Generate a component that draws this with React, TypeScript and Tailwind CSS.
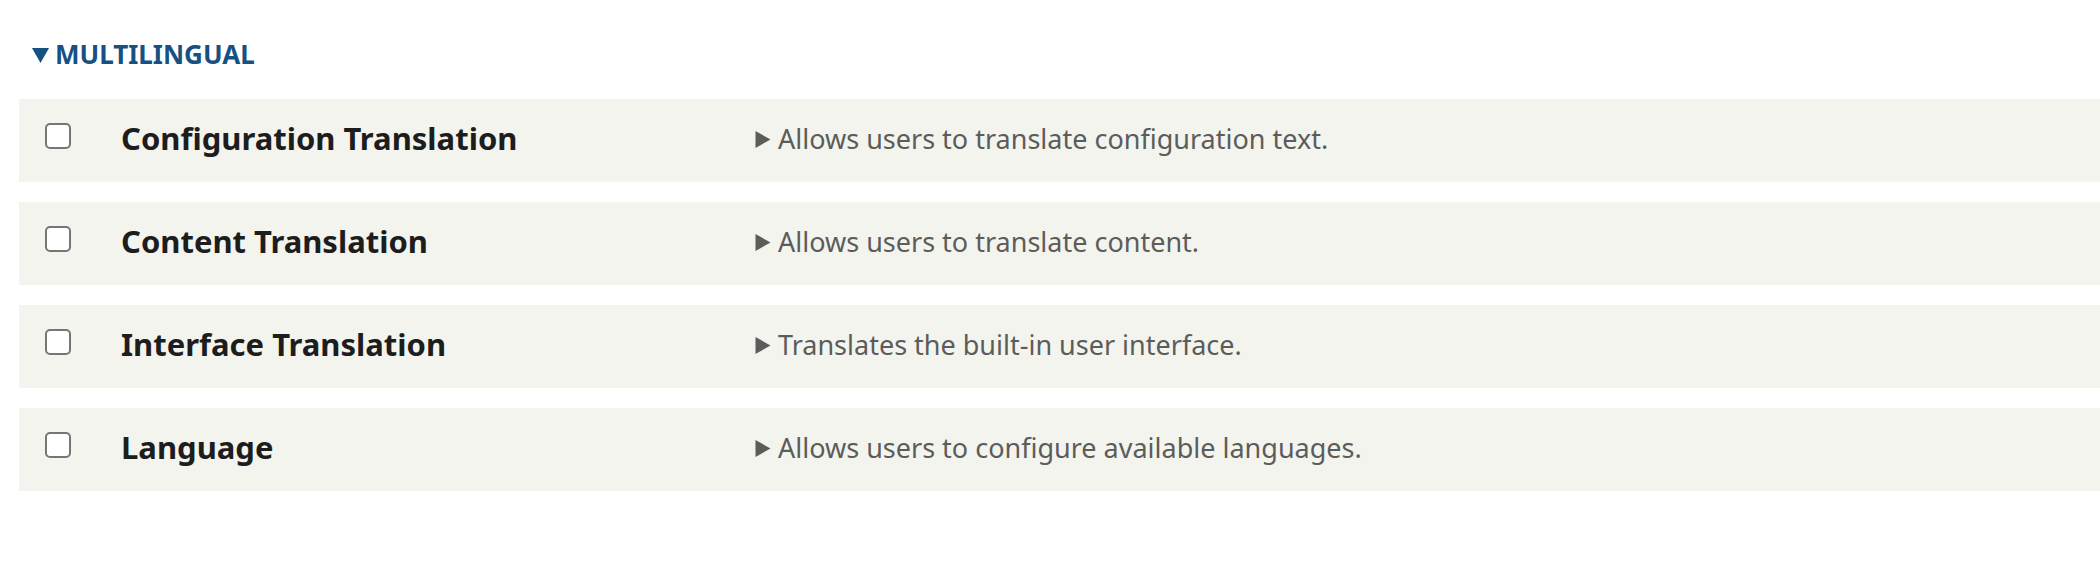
const modules = [
  { id: "config", name: "Configuration Translation", description: "Allows users to translate configuration text." },
  { id: "content", name: "Content Translation", description: "Allows users to translate content." },
  { id: "interface", name: "Interface Translation", description: "Translates the built-in user interface." },
  { id: "language", name: "Language", description: "Allows users to configure available languages." },
];

function ModuleRow({ id, name, description }: { id: string; name: string; description: string }) {
  return (
    <tr className="align-top">
      <td className="w-[100px] border-b-20 border-white bg-[#f3f4ee] pt-6 pl-[26px]">
        <input
          id={id}
          type="checkbox"
          className="block size-[26px] appearance-none rounded-[5px] border-2 border-[#767676] bg-white checked:bg-[#004f80]"
        />
      </td>
      <td className="w-[636px] border-b-20 border-white bg-[#f3f4ee] pt-5 pb-[23px] pl-[2px]">
        <label htmlFor={id} className="block text-[31px] leading-[38px] font-bold text-[#1d1d1d]">
          {name}
        </label>
      </td>
      <td className="border-b-20 border-white bg-[#f3f4ee] pt-5 pb-[23px]">
        <details className="group">
          <summary className="flex list-none items-center gap-[7px] text-[27px] leading-10 text-[#5c5c5b]">
            <svg viewBox="0 0 16 18" className="h-[18px] w-4 group-open:rotate-90" fill="currentColor" aria-hidden="true">
              <path d="M0.5 1 15.5 9.5 0.5 18Z" />
            </svg>
            {description}
          </summary>
        </details>
      </td>
    </tr>
  );
}

export default function App() {
  return (
    <main className="bg-white pt-[34px] pb-[54px] pl-[19px] font-['Noto_Sans','Open_Sans',sans-serif]">
      <details open className="group/package">
        <summary className="mb-[25px] flex list-none items-center gap-[6px] pl-[13px] text-[26px] leading-10 font-bold text-[#175082]">
          <svg viewBox="0 0 17 18" className="h-[18px] w-[17px] -rotate-90 group-open/package:rotate-0" fill="currentColor" aria-hidden="true">
            <path d="M0 3H17L8.5 18Z" />
          </svg>
          MULTILINGUAL
        </summary>
        <table className="w-full table-fixed border-separate border-spacing-0" aria-label="Multilingual modules">
          <tbody>
            {modules.map((item) => (
              <ModuleRow key={item.id} {...item} />
            ))}
          </tbody>
        </table>
      </details>
    </main>
  );
}
